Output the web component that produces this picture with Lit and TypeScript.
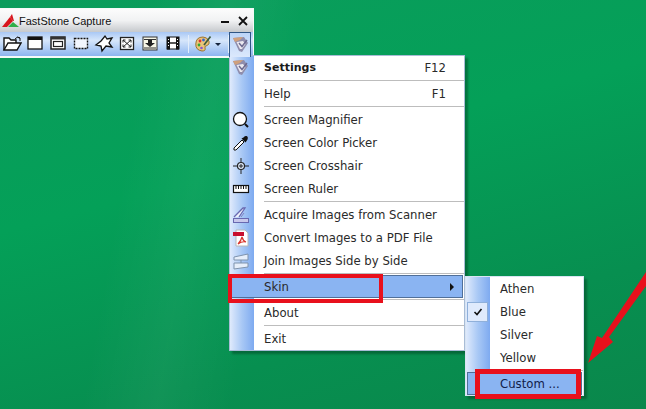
import { LitElement, html, css, svg } from "lit";
import { customElement } from "lit/decorators.js";

type Row = { t: string; k?: string; bold?: boolean; hl?: boolean; sub?: boolean; icon?: any };

const skinIcon = svg`<svg width="17" height="17" viewBox="0 0 17 17"><path d="M1 2 L12 1 L16 7 L10 16 L7 15 Z" fill="#8f8dac"/><path d="M4.500 6 L11 5 L13.500 8 L10 13 L8 13 Z" fill="#eceaf0"/><path d="M1 2 L11 1 L8 4 L3 6 Z" fill="#cfa07c"/><path d="M7 7 L10 10.500 L15 4" fill="none" stroke="#6c6a90" stroke-width="1.500"/></svg>`;
const mag = svg`<svg width="18" height="18" viewBox="0 0 18 18"><circle cx="8" cy="8" r="6.500" fill="#fff" stroke="#111" stroke-width="1.300"/><path d="M13 13 L16 16" stroke="#111" stroke-width="2"/></svg>`;
const drop = svg`<svg width="18" height="18" viewBox="0 0 18 18"><path d="M2 16 L2 14 L10 6 L12 8 L4 16 Z" fill="#fff" stroke="#111"/><path d="M9.500 4.500 L13.500 8.500 L15.500 5.500 Q16.500 2.500 14.500 2 Q12.500 1.500 11.500 3.500 Z" fill="#111"/></svg>`;
const cross = svg`<svg width="18" height="18" viewBox="0 0 18 18"><path d="M1 9 H17 M9 1 V17" stroke="#222"/><circle cx="9" cy="9" r="3.500" fill="#dde8fa" stroke="#222" stroke-width="1.200"/><path d="M7 9 H11 M9 7 V11" stroke="#222"/></svg>`;
const ruler = svg`<svg width="18" height="18" viewBox="0 0 18 18"><rect x="1.500" y="5.500" width="15" height="7" fill="#fff" stroke="#111" stroke-width="1.200"/><path d="M4 6 V9 M6.500 6 V9 M9 6 V9 M11.500 6 V9 M14 6 V9" stroke="#111"/></svg>`;
const scan = svg`<svg width="18" height="18" viewBox="0 0 18 18"><path d="M2 11 L11 2 L13 2 L7 11" fill="#eef2fc" stroke="#6868b0" stroke-width="1.300"/><path d="M9 11 L12 7" stroke="#8080c0"/><rect x="1.500" y="12.500" width="15" height="4" fill="#c8c8ec" stroke="#6868b0"/></svg>`;
const pdf = svg`<svg width="18" height="18" viewBox="0 0 18 18"><path d="M4 1 H13 L16 4 V17 H4 Z" fill="#fff" stroke="#b8b8b8"/><rect x="1" y="3" width="11" height="4" fill="#c8102e"/><path d="M6 15 Q9 12 10 8 Q11 12 14 13 Q10 12 6 15" fill="none" stroke="#d8332a" stroke-width="1.200"/></svg>`;
const join = svg`<svg width="18" height="18" viewBox="0 0 18 18"><path d="M2 5 L16 2 V8 H2 Z" fill="#e6eefa" stroke="#7f93ad"/><path d="M2 11 H16 V15 L2 17 Z" fill="#e6eefa" stroke="#7f93ad"/><path d="M9 8 V11" stroke="#7f93ad"/></svg>`;

const tb = [
  svg`<path d="M2 16 V4 H7 L9 6 H14 V9" fill="#fff" stroke="#111" stroke-width="1.400"/><path d="M2 16 L6 9 H19 L15 16 Z" fill="#fff" stroke="#111" stroke-width="1.400"/><path d="M13 5 Q15 2 18 4 M18 4 L15.500 3 M18 4 L18 7" fill="none" stroke="#111"/>`,
  svg`<rect x="3" y="3" width="14" height="12" fill="#fff" stroke="#111" stroke-width="1.300"/><rect x="3" y="3" width="14" height="3" fill="#111"/>`,
  svg`<rect x="3" y="3" width="14" height="12" fill="#fff" stroke="#222" stroke-width="1.500"/><rect x="3" y="3" width="14" height="2.500" fill="#333"/><rect x="5.500" y="7.500" width="9" height="5" fill="none" stroke="#222" stroke-width="1.200"/>`,
  svg`<rect x="3.500" y="4.500" width="13" height="10" fill="#f2f6fd" stroke="#111" stroke-width="1.400" stroke-dasharray="2 1"/>`,
  svg`<path d="M7 7 L11 2 L13 5 L18 4 L15 9 L18 13 L12 12 L8 17 L7 12 L2 11 Z" fill="#fff" stroke="#111" stroke-width="1.300"/>`,
  svg`<rect x="3.500" y="3.500" width="13" height="12" fill="#fff" stroke="#222" stroke-width="1.300"/><path d="M6 6 L14 13 M14 6 L6 13 M6 6 H8.500 M6 6 V8.500 M14 13 H11.500 M14 13 V10.500 M14 6 H11.500 M14 6 V8.500 M6 13 H8.500 M6 13 V10.500" stroke="#222"/>`,
  svg`<rect x="3" y="3" width="14" height="13" fill="#f8f8e8" stroke="#333"/><path d="M4 5.500 H16 M4 14 H16" stroke="#333"/><path d="M8 6 H12 V9 H15 L10 13 L5 9 H8 Z" fill="#222"/>`,
  svg`<rect x="4" y="3" width="12" height="12" fill="#fff" stroke="#111"/><path d="M4 3 H7 V15.500 H4 Z M13 3 H16 V15.500 H13 Z" fill="#111"/><path d="M7 9 H13" stroke="#111" stroke-width="1.400"/><path d="M5.500 5 V6 M5.500 8 V9 M5.500 11 V12 M14.500 5 V6 M14.500 8 V9 M14.500 11 V12" stroke="#fff"/>`,
];
const palette = svg`<svg width="17" height="17" viewBox="0 0 17 17"><path d="M8 2 Q1 2 .8 9 Q.5 15 7 16 Q11 16 10 13 Q9 11 12 10.500 Q15 9.500 14 6 Q12 2 8 2Z" fill="#ecc47a" stroke="#9a7430"/><circle cx="5" cy="6" r="1.400" fill="#d33"/><circle cx="8.500" cy="5" r="1.400" fill="#36c"/><circle cx="4" cy="10" r="1.400" fill="#3a3"/><circle cx="6.500" cy="13" r="1.300" fill="#85c"/><path d="M9 10 L15.500 1.500" stroke="#3c5a3c" stroke-width="1.700"/></svg>`;

const main: (Row | null)[] = [
  { t: "Settings", k: "F12", bold: true, icon: skinIcon },
  null,
  { t: "Help", k: "F1" },
  null,
  { t: "Screen Magnifier", icon: mag },
  { t: "Screen Color Picker", icon: drop },
  { t: "Screen Crosshair", icon: cross },
  { t: "Screen Ruler", icon: ruler },
  null,
  { t: "Acquire Images from Scanner", icon: scan },
  { t: "Convert Images to a PDF File", icon: pdf },
  { t: "Join Images Side by Side", icon: join },
  null,
  { t: "Skin", hl: true, sub: true },
  null,
  { t: "About" },
  null,
  { t: "Exit" },
];
const skins: (Row | null)[] = [{ t: "Athen" }, { t: "Blue", k: "check" }, { t: "Silver" }, { t: "Yellow" }, null, { t: "Custom ...", hl: true }];

@customElement("app-root")
export class AppRoot extends LitElement {
  static styles = css`
    :host { display: block; width: 646px; height: 409px; overflow: hidden; position: relative; font-family: "DejaVu Sans", sans-serif; font-size: 11.7px; color: #2a2a2a;
      background:
        linear-gradient(100deg, transparent 150px, rgba(255,255,255,.045) 225px, transparent 300px),
        linear-gradient(165deg, #0b9c5c 0%, #04a058 40%, #078f50 75%, #0a874b 100%); }
    .win { position: absolute; left: -2px; top: 8px; width: 256px; height: 50px; background: #f4faf8; display: flex; flex-direction: column; padding: 1px 1px 2px 0; box-sizing: border-box; }
    .title { height: 23px; display: flex; align-items: center; background: linear-gradient(#fcfcfc, #f1f2f3 50%, #c6c9cd); font-family: "Liberation Sans", sans-serif; font-size: 11px; padding-left: 3px; color: #111; }
    .title .name { flex: 1; }
    .min { width: 8px; height: 2px; background: #111; margin: 3px 9px 0 0; }
    .close { margin-right: 5px; display: flex; }
    .bar { flex: 1; display: flex; align-items: center; background: linear-gradient(#a9c8f5, #d6e6fb 35%, #8db5f0); padding-left: 2px; position: relative; }
    .tool { width: 23px; height: 20px; display: flex; justify-content: center; flex: none; }
    .sep { width: 1px; height: 18px; background: #e4eefb; margin: 0 6px 0 4px; flex: none; }
    .pal { display: flex; margin-top: -1px; }
    .sep2 { margin: 0 0 0 7px; }
    .on { position: absolute; left: 231px; top: 0; width: 22px; height: 25px; box-sizing: border-box; border: 1px solid #2f5685; border-bottom: 0; display: flex; justify-content: center; padding-top: 3px; background: linear-gradient(#bcd5f8, #dbe8fc); z-index: 3; }
    .caret { width: 0; height: 0; border: 3px solid transparent; border-top: 3px solid #16233c; border-bottom: 0; align-self: center; margin-left: 3px; }
    .menu { position: absolute; background: #fff; border: 1px solid #a8bcd6; box-sizing: border-box; box-shadow: 3px 3px 2px rgba(0,50,25,.4); display: flex; flex-direction: column; }
    .m1 { left: 229px; top: 55px; width: 236px; height: 296px; z-index: 2; }
    .m2 { left: 465px; top: 276px; width: 119px; height: 120px; z-index: 3; border-color: #d8e4f2; }
    .strip { position: absolute; left: 0; top: 0; bottom: 0; width: 24px; background: linear-gradient(90deg, #dfeafc, #a8c8f5 50%, #7eaaf0); }
    .row { height: 23px; display: flex; align-items: center; position: relative; flex: none; }
    .m1 .row { padding-left: 34px; padding-right: 18px; }
    .m2 .row { padding-left: 34px; }
    .row .t { flex: 1; }
    .row .b { font-weight: bold; font-size: 11px; color: #1a1a1a; }
    .ic { position: absolute; left: 0; top: 0; width: 21px; height: 23px; display: flex; align-items: center; justify-content: center; }
    .hl { background: #8ab4f2; margin: 0 1px; outline: 1px solid #506f98; outline-offset: -1px; }
    .m1 .hl { padding-left: 33px; }
    .m2 .hl { padding-left: 33px; color: #10204a; }
    .hr { height: 1px; margin: 1px 0 1px 34px; background: #bdbdbd; flex: none; position: relative; }
    .arrow { position: absolute; right: 9px; width: 0; height: 0; border: 4px solid transparent; border-left: 4px solid #111; border-right: 0; }
    .chk { position: absolute; left: 1px; top: 2px; width: 21px; height: 20px; box-sizing: border-box; border: 1px solid #8fb0da; background: #dfeafc; display: flex; align-items: center; justify-content: center; }
    .rbox { position: absolute; box-sizing: border-box; border: 4px solid #e8101c; z-index: 5; }
    .r1 { left: 228px; top: 274px; width: 155px; height: 29px; }
    .r2 { left: 475px; top: 369px; width: 106px; height: 30px; border-width: 5px; }
    .ann { position: absolute; left: 0; top: 0; z-index: 6; }
  `;

  row(r: Row | null) {
    if (!r) return html`<div class="hr"></div>`;
    return html`<div class="row ${r.hl ? "hl" : ""}">
      ${r.icon ? html`<span class="ic">${r.icon}</span>` : ""}
      ${r.k === "check" ? html`<span class="chk"><svg width="10" height="10" viewBox="0 0 10 10"><path d="M1.500 5 L4 7.500 L8.500 2" fill="none" stroke="#111" stroke-width="1.600"/></svg></span>` : ""}
      <span class="t ${r.bold ? "b" : ""}">${r.t}</span>
      ${r.k && r.k !== "check" ? html`<span>${r.k}</span>` : ""}
      ${r.sub ? html`<span class="arrow"></span>` : ""}
    </div>`;
  }

  render() {
    return html`
      <div class="win">
        <div class="title">
          <svg width="18" height="14" viewBox="0 0 18 14"><path d="M1 13 L9 3 L12 7 L6 13 Z" fill="#d8141c"/><path d="M9 3 L11 0 L13 7 L12 7Z" fill="#d8141c"/><path d="M7 13 L12 8 L18 13 Z" fill="#2fae4a"/></svg>
          <span class="name">FastStone Capture</span>
          <span class="min"></span>
          <span class="close"><svg width="10" height="10" viewBox="0 0 10 10"><path d="M1 1 L9 9 M9 1 L1 9" stroke="#111" stroke-width="1.800"/></svg></span>
        </div>
        <div class="bar">
          ${tb.map((p) => html`<span class="tool"><svg width="20" height="20" viewBox="0 0 20 20">${p}</svg></span>`)}
          <span class="sep"></span>
          <span class="pal">${palette}</span><span class="caret"></span>
          <span class="sep sep2"></span>
          <span class="on">${skinIcon}</span>
        </div>
      </div>
      <div class="menu m1"><div class="strip"></div>${main.map((r) => this.row(r))}</div>
      <div class="menu m2"><div class="strip"></div>${skins.map((r) => this.row(r))}</div>
      <div class="rbox r1"></div>
      <div class="rbox r2"></div>
      <svg class="ann" width="646" height="409" viewBox="0 0 646 409"><path d="M646 286 L609 337 L613 342 L588 363 L597 336 L602 338 L646 272 Z" fill="#e8101c"/></svg>
    `;
  }
}
